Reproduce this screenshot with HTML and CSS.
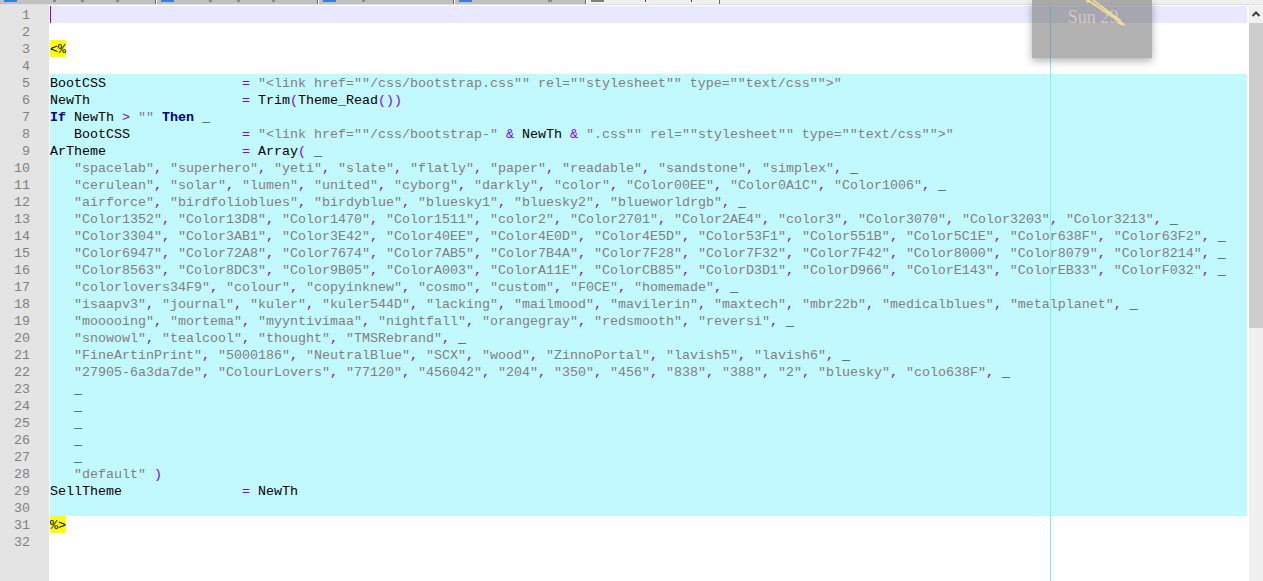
FILE: index.html
```html
<!DOCTYPE html>
<html lang="en">
<head>
<meta charset="utf-8">
<title>Editor</title>
<link rel="stylesheet" href="styles.css">
</head>
<body>
<div class="app">
  <div class="tabs">
    <div class="tab tab-1"><i class="tab-icon"></i></div>
    <div class="tab tab-2"><i class="tab-icon"></i></div>
    <div class="tab tab-3"><i class="tab-icon"></i></div>
    <div class="tab tab-4"><i class="tab-icon"></i></div>
    <div class="tab tab-active"><i class="tab-icon tab-icon-grey"></i></div>
  </div>
  <div class="editor">
    <div class="gutter">
      <div>1</div><div>2</div><div>3</div><div>4</div><div>5</div><div>6</div><div>7</div><div>8</div><div>9</div><div>10</div><div>11</div><div>12</div><div>13</div><div>14</div><div>15</div><div>16</div><div>17</div><div>18</div><div>19</div><div>20</div><div>21</div><div>22</div><div>23</div><div>24</div><div>25</div><div>26</div><div>27</div><div>28</div><div>29</div><div>30</div><div>31</div><div>32</div>
    </div>
    <div class="code">
      <div class="line current"><i class="caret"></i></div>
      <div class="line"></div>
      <div class="line"><span class="tag">&lt;%</span></div>
      <div class="line"></div>
      <div class="line sel">BootCSS                 <b>=</b> <s>"&lt;link href=""/css/bootstrap.css"" rel=""stylesheet"" type=""text/css""&gt;"</s></div>
      <div class="line sel">NewTh                   <b>=</b> Trim<b>(</b>Theme_Read<b>())</b></div>
      <div class="line sel"><em>If</em> NewTh <b>&gt;</b> <s>""</s> <em>Then</em> _</div>
      <div class="line sel">   BootCSS              <b>=</b> <s>"&lt;link href=""/css/bootstrap-"</s> <b>&amp;</b> NewTh <b>&amp;</b> <s>".css"" rel=""stylesheet"" type=""text/css""&gt;"</s></div>
      <div class="line sel">ArTheme                 <b>=</b> Array<b>(</b> _</div>
      <div class="line sel">   <s>"spacelab"</s><b>,</b> <s>"superhero"</s><b>,</b> <s>"yeti"</s><b>,</b> <s>"slate"</s><b>,</b> <s>"flatly"</s><b>,</b> <s>"paper"</s><b>,</b> <s>"readable"</s><b>,</b> <s>"sandstone"</s><b>,</b> <s>"simplex"</s><b>,</b> _</div>
      <div class="line sel">   <s>"cerulean"</s><b>,</b> <s>"solar"</s><b>,</b> <s>"lumen"</s><b>,</b> <s>"united"</s><b>,</b> <s>"cyborg"</s><b>,</b> <s>"darkly"</s><b>,</b> <s>"color"</s><b>,</b> <s>"Color00EE"</s><b>,</b> <s>"Color0A1C"</s><b>,</b> <s>"Color1006"</s><b>,</b> _</div>
      <div class="line sel">   <s>"airforce"</s><b>,</b> <s>"birdfolioblues"</s><b>,</b> <s>"birdyblue"</s><b>,</b> <s>"bluesky1"</s><b>,</b> <s>"bluesky2"</s><b>,</b> <s>"blueworldrgb"</s><b>,</b> _</div>
      <div class="line sel">   <s>"Color1352"</s><b>,</b> <s>"Color13D8"</s><b>,</b> <s>"Color1470"</s><b>,</b> <s>"Color1511"</s><b>,</b> <s>"color2"</s><b>,</b> <s>"Color2701"</s><b>,</b> <s>"Color2AE4"</s><b>,</b> <s>"color3"</s><b>,</b> <s>"Color3070"</s><b>,</b> <s>"Color3203"</s><b>,</b> <s>"Color3213"</s><b>,</b> _</div>
      <div class="line sel">   <s>"Color3304"</s><b>,</b> <s>"Color3AB1"</s><b>,</b> <s>"Color3E42"</s><b>,</b> <s>"Color40EE"</s><b>,</b> <s>"Color4E0D"</s><b>,</b> <s>"Color4E5D"</s><b>,</b> <s>"Color53F1"</s><b>,</b> <s>"Color551B"</s><b>,</b> <s>"Color5C1E"</s><b>,</b> <s>"Color638F"</s><b>,</b> <s>"Color63F2"</s><b>,</b> _</div>
      <div class="line sel">   <s>"Color6947"</s><b>,</b> <s>"Color72A8"</s><b>,</b> <s>"Color7674"</s><b>,</b> <s>"Color7AB5"</s><b>,</b> <s>"Color7B4A"</s><b>,</b> <s>"Color7F28"</s><b>,</b> <s>"Color7F32"</s><b>,</b> <s>"Color7F42"</s><b>,</b> <s>"Color8000"</s><b>,</b> <s>"Color8079"</s><b>,</b> <s>"Color8214"</s><b>,</b> _</div>
      <div class="line sel">   <s>"Color8563"</s><b>,</b> <s>"Color8DC3"</s><b>,</b> <s>"Color9B05"</s><b>,</b> <s>"ColorA003"</s><b>,</b> <s>"ColorA11E"</s><b>,</b> <s>"ColorCB85"</s><b>,</b> <s>"ColorD3D1"</s><b>,</b> <s>"ColorD966"</s><b>,</b> <s>"ColorE143"</s><b>,</b> <s>"ColorEB33"</s><b>,</b> <s>"ColorF032"</s><b>,</b> _</div>
      <div class="line sel">   <s>"colorlovers34F9"</s><b>,</b> <s>"colour"</s><b>,</b> <s>"copyinknew"</s><b>,</b> <s>"cosmo"</s><b>,</b> <s>"custom"</s><b>,</b> <s>"F0CE"</s><b>,</b> <s>"homemade"</s><b>,</b> _</div>
      <div class="line sel">   <s>"isaapv3"</s><b>,</b> <s>"journal"</s><b>,</b> <s>"kuler"</s><b>,</b> <s>"kuler544D"</s><b>,</b> <s>"lacking"</s><b>,</b> <s>"mailmood"</s><b>,</b> <s>"mavilerin"</s><b>,</b> <s>"maxtech"</s><b>,</b> <s>"mbr22b"</s><b>,</b> <s>"medicalblues"</s><b>,</b> <s>"metalplanet"</s><b>,</b> _</div>
      <div class="line sel">   <s>"mooooing"</s><b>,</b> <s>"mortema"</s><b>,</b> <s>"myyntivimaa"</s><b>,</b> <s>"nightfall"</s><b>,</b> <s>"orangegray"</s><b>,</b> <s>"redsmooth"</s><b>,</b> <s>"reversi"</s><b>,</b> _</div>
      <div class="line sel">   <s>"snowowl"</s><b>,</b> <s>"tealcool"</s><b>,</b> <s>"thought"</s><b>,</b> <s>"TMSRebrand"</s><b>,</b> _</div>
      <div class="line sel">   <s>"FineArtinPrint"</s><b>,</b> <s>"5000186"</s><b>,</b> <s>"NeutralBlue"</s><b>,</b> <s>"SCX"</s><b>,</b> <s>"wood"</s><b>,</b> <s>"ZinnoPortal"</s><b>,</b> <s>"lavish5"</s><b>,</b> <s>"lavish6"</s><b>,</b> _</div>
      <div class="line sel">   <s>"27905-6a3da7de"</s><b>,</b> <s>"ColourLovers"</s><b>,</b> <s>"77120"</s><b>,</b> <s>"456042"</s><b>,</b> <s>"204"</s><b>,</b> <s>"350"</s><b>,</b> <s>"456"</s><b>,</b> <s>"838"</s><b>,</b> <s>"388"</s><b>,</b> <s>"2"</s><b>,</b> <s>"bluesky"</s><b>,</b> <s>"colo638F"</s><b>,</b> _</div>
      <div class="line sel">   _</div>
      <div class="line sel">   _</div>
      <div class="line sel">   _</div>
      <div class="line sel">   _</div>
      <div class="line sel">   _</div>
      <div class="line sel">   <s>"default"</s> <b>)</b></div>
      <div class="line sel">SellTheme               <b>=</b> NewTh</div>
      <div class="line sel"></div>
      <div class="line"><span class="tag">%&gt;</span></div>
      <div class="line"></div>
    </div>
    <div class="scrollbar">
      <div class="scroll-up">
        <svg width="14" height="17" viewBox="0 0 14 17"><path d="M3.5 10 L7 6.5 L10.5 10" fill="none" stroke="#404040" stroke-width="2"/></svg>
      </div>
      <div class="scroll-thumb"></div>
      <div class="scroll-track"></div>
    </div>
    <div class="edge-line"></div>
  </div>
  <div class="toast">
    <span class="toast-text">Sun 29</span>
    <svg class="toast-key" width="60" height="30" viewBox="0 0 60 30"><path d="M8 0 L9 3 L12 2 L12 0 Z" fill="#f0dc9a"/><path d="M11 1 L44 23 M15 0 L43 21 M38 19 L47 25 M39 22 L45 25" fill="none" stroke="#f0dc9a" stroke-width="1.6"/></svg>
  </div>
</div>
</body>
</html>
```
FILE: styles.css
```css
html, body {
  margin: 0;
  padding: 0;
  height: 100%;
  overflow: hidden;
  background: #fff;
}

.app {
  position: relative;
  display: flex;
  flex-direction: column;
  width: 1263px;
  height: 581px;
  overflow: hidden;
}

.tabs {
  display: flex;
  flex: none;
  height: 4px;
  background: #f0f0f0;
  border-bottom: 1px solid #e0e0e0;
}

.tab {
  flex: none;
  height: 4px;
  position: relative;
  border-right: 1px solid #696969;
  border-left: 1px solid #fff;
  box-sizing: border-box;
}
.tab-1 {
  width: 156px;
  border-left: 0;
  background:
    linear-gradient(#8a8a8a, #8a8a8a) 53px 0 / 3px 2px no-repeat,
    linear-gradient(#8a8a8a, #8a8a8a) 81px 0 / 3px 2px no-repeat,
    linear-gradient(#8a8a8a, #8a8a8a) 116px 0 / 3px 2px no-repeat,
    #c0c0c0;
}
.tab-2 {
  width: 162px;
  background:
    linear-gradient(#8a8a8a, #8a8a8a) 52px 0 / 3px 2px no-repeat,
    linear-gradient(#8a8a8a, #8a8a8a) 80px 0 / 3px 2px no-repeat,
    linear-gradient(#8a8a8a, #8a8a8a) 115px 0 / 3px 2px no-repeat,
    #c0c0c0;
}
.tab-3 {
  width: 136px;
  background:
    linear-gradient(#8a8a8a, #8a8a8a) 43px 0 / 3px 2px no-repeat,
    #c0c0c0;
}
.tab-4 {
  width: 132px;
  background:
    linear-gradient(#8a8a8a, #8a8a8a) 93px 0 / 4px 2px no-repeat,
    #c0c0c0;
}
.tab-active {
  width: 134px;
  background:
    linear-gradient(#2f3f9f, #2f3f9f) 58px 0 / 1px 2px no-repeat,
    linear-gradient(#2f3f9f, #2f3f9f) 104px 0 / 1px 2px no-repeat,
    #f0f0f0;
}

.tab-icon {
  display: block;
  width: 13px;
  height: 2px;
  margin-left: 4px;
  background: #3c7fd0;
}
.tab-icon-grey { background: #808080; }

.editor {
  position: relative;
  display: flex;
  flex: 1;
  min-height: 0;
  padding-top: 1px;
  background: #fff;
}

.gutter {
  flex: none;
  width: 49px;
  margin-top: -1px;
  padding-top: 1px;
  box-sizing: border-box;
  background: #e4e4e4;
  color: #808080;
  font: 13.33px/19px "Liberation Mono", monospace;
  text-align: right;
}
.gutter div {
  height: 17px;
  padding-right: 19px;
}

.code {
  flex: none;
  width: 1197px;
  margin-left: 1px;
  font: 13.33px/19px "Liberation Mono", monospace;
  color: #000;
}

.line {
  height: 17px;
  position: relative;
  white-space: pre;
}
.current { background: #e8e8ff; }
.sel { background: #c2f9fe; }

.caret {
  position: absolute;
  left: 0;
  top: 0;
  width: 1px;
  height: 17px;
  background: #8000ff;
}

.tag {
  display: inline-block;
  height: 17px;
  vertical-align: top;
  background: #ffff00;
}

.code b { font-weight: normal; color: #8000ff; }
.code s { text-decoration: none; color: #808080; }
.code em { font-style: normal; font-weight: bold; color: #000080; }

.scrollbar {
  flex: none;
  display: flex;
  flex-direction: column;
  width: 14px;
  margin-left: 2px;
}
.scroll-up { flex: none; height: 17px; background: #f0f0f0; }
.scroll-up svg { display: block; }
.scroll-thumb { flex: none; height: 305px; background: #cdcdcd; }
.scroll-track { flex: 1; background: #f0f0f0; }

.edge-line {
  position: absolute;
  left: 1050px;
  top: 1px;
  bottom: 0;
  width: 1px;
  background: #80f0f0;
}

.toast {
  position: absolute;
  left: 1032px;
  top: 0;
  width: 120px;
  height: 58px;
  background: rgba(100, 100, 100, 0.5);
  box-shadow: 0 3px 8px rgba(0, 0, 0, 0.3);
  text-align: center;
}
.toast-text {
  display: block;
  margin-top: 7px;
  padding-left: 2px;
  font: 18px/20px "Liberation Serif", serif;
  color: #cfc8c0;
}
.toast-key {
  position: absolute;
  left: 46px;
  top: 0;
}
```
